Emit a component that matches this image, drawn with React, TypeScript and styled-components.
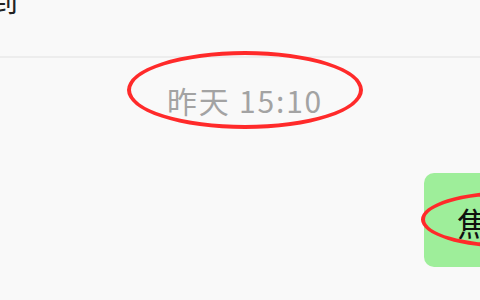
import React from "react";
import styled, { createGlobalStyle } from "styled-components";

const Global = createGlobalStyle`
  html, body { margin: 0; padding: 0; background: #f9f9f9; overflow: hidden; }
  body { font-family: "Noto Sans CJK SC", "Noto Sans", sans-serif; }
`;

const Page = styled.div`
  position: relative;
  width: 480px;
  height: 300px;
  overflow: hidden;
  background: #f9f9f9;
`;

const Header = styled.div`
  height: 58px;
  border-bottom: 2px solid #ededed;
  box-sizing: border-box;
  overflow: hidden;
`;

const HeaderText = styled.div`
  font-size: 30px;
  line-height: 30px;
  color: #222;
  margin-top: -16px;
  margin-left: -12px;
`;

const Stamp = styled.div`
  display: flex;
  justify-content: center;
  padding-top: 22px;
  padding-left: 10px;
  font-size: 30px;
  line-height: 40px;
  letter-spacing: 1.8px;
  color: #a3a3a3;
`;

const Row = styled.div`
  display: flex;
  justify-content: flex-start;
  padding-left: 424px;
  margin-top: 53px;
`;

const Bubble = styled.div`
  flex: none;
  width: 120px;
  height: 94px;
  box-sizing: border-box;
  background: #9eee9a;
  border-radius: 10px;
  padding: 29px 0 0 33px;
  font-size: 32px;
  line-height: 40px;
  color: #111;
  white-space: nowrap;
`;

const Ring = styled.div<{ $x: number; $y: number; $w: number; $h: number }>`
  position: absolute;
  left: ${(p) => p.$x}px;
  top: ${(p) => p.$y}px;
  width: ${(p) => p.$w}px;
  height: ${(p) => p.$h}px;
  border: 4px solid #ff2a2a;
  border-radius: 50%;
  box-sizing: border-box;
  pointer-events: none;
`;

export default function App() {
  return (
    <Page>
      <Global />
      <Header>
        <HeaderText>到</HeaderText>
      </Header>
      <Stamp>昨天 15:10</Stamp>
      <Row>
        <Bubble>焦虑</Bubble>
      </Row>
      <Ring $x={127} $y={51} $w={236} $h={78} />
      <Ring $x={421} $y={191} $w={180} $h={57} />
    </Page>
  );
}
